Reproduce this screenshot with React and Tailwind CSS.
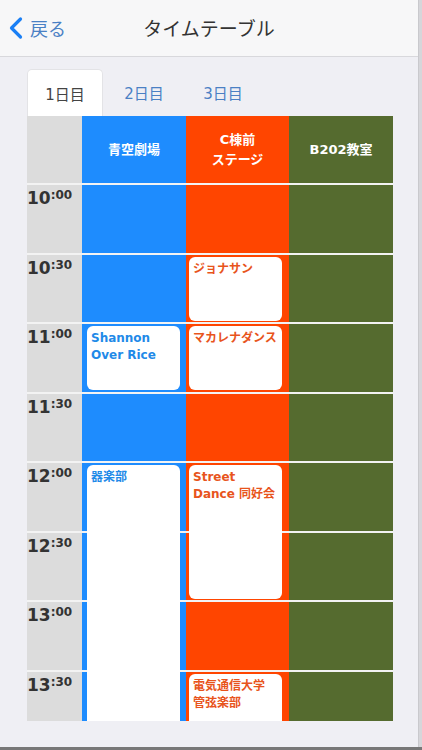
import React from 'react';

const font = { fontFamily: '"DejaVu Sans", "Noto Sans CJK JP", sans-serif' };

const times = [
  ['10', '00'], ['10', '30'], ['11', '00'], ['11', '30'],
  ['12', '00'], ['12', '30'], ['13', '00'], ['13', '30'],
];

const rowStart = ['row-start-2', 'row-start-3', 'row-start-4', 'row-start-5', 'row-start-6', 'row-start-7', 'row-start-8', 'row-start-9'];

const stages = [
  { col: 'col-start-2', bg: 'bg-[#1e8cfe]' },
  { col: 'col-start-3', bg: 'bg-[#ff4500]' },
  { col: 'col-start-4', bg: 'bg-[#556b2f]' },
];

const events = [
  { lines: ['ジョナサン'], cls: 'col-start-3 row-start-3 row-span-1', color: 'orange' },
  { lines: ['Shannon', 'Over Rice'], cls: 'col-start-2 row-start-4 row-span-1', color: 'blue', latin: true },
  { lines: ['マカレナダンス'], cls: 'col-start-3 row-start-4 row-span-1', color: 'orange' },
  { lines: ['器楽部'], cls: 'col-start-2 row-start-6 row-span-4', color: 'blue', open: true },
  { lines: ['Street', 'Dance 同好会'], cls: 'col-start-3 row-start-6 row-span-2', color: 'orange', latin: true },
  { lines: ['電気通信大学', '管弦楽部'], cls: 'col-start-3 row-start-9 row-span-1', color: 'orange', open: true },
];

function EventCard({ ev }) {
  const isBlue = ev.color === 'blue';
  const margin = isBlue ? 'ml-[5px] mr-[6px]' : 'ml-[3px] mr-[7px]';
  const text = isBlue ? 'text-[#1f8ae8]' : 'text-[#e8541c]';
  return (
    <div className={`${ev.cls} ${margin} mt-[2px] ${ev.open ? 'mb-0 rounded-t-[6px]' : 'mb-[1.5px] rounded-[6px]'} bg-white z-10`}>
      <div className={`px-[4px] pt-[4px] leading-[17px] whitespace-nowrap ${ev.latin ? 'font-bold' : 'font-semibold'} text-[12px] ${text}`}>
        {ev.lines.map((l, i) => (
          <div key={i}>{l}</div>
        ))}
      </div>
    </div>
  );
}

export default function App() {
  return (
    <div className="w-[422px] h-[750px] bg-[#d6d6da] flex flex-col overflow-hidden" style={font}>
      <div className="flex h-[747px]">
        <div className="w-[419px] h-full bg-[#efeff4] flex flex-col border-r border-[#c9c9cd]">
          {/* nav bar */}
          <div className="h-[57px] shrink-0 bg-[#f7f7f8] border-b border-[#d8d8dc] grid grid-cols-[1fr_auto_1fr] items-center">
            <div className="flex items-center pl-[8px] gap-[6px]">
              <svg width="16" height="24" viewBox="0 0 16 24" fill="none">
                <path d="M12.5 3 L3.5 12 L12.5 21" stroke="#1a7ff5" strokeWidth="3.2" strokeLinecap="round" strokeLinejoin="round" />
              </svg>
              <span className="text-[18px] text-[#4a80c4]" style={{ fontFamily: '"Noto Sans CJK JP", sans-serif' }}>戻る</span>
            </div>
            <div className="text-[19px] text-[#333]" style={{ fontFamily: '"Noto Sans CJK JP", sans-serif' }}>タイムテーブル</div>
            <div />
          </div>

          {/* tabs */}
          <div className="flex gap-[3px] pl-[27px] pt-[12px] h-[59px] shrink-0">
            <div className="w-[76px] h-[47px] bg-white rounded-t-[5px] border border-b-0 border-[#e3e3e6] flex items-center justify-center pt-[4px] text-[15px] text-[#444]">1日目</div>
            <div className="w-[76px] h-[47px] flex items-center justify-center pt-[4px] text-[15px] text-[#4a80c4]">2日目</div>
            <div className="w-[76px] h-[47px] flex items-center justify-center pt-[4px] text-[15px] text-[#4a80c4]">3日目</div>
          </div>

          {/* table */}
          <div className="ml-[27px] w-[366px] h-[605px] overflow-hidden bg-[#f3f3f3]">
            <div className="grid grid-cols-[55px_104px_103px_104px] grid-rows-[67px_repeat(8,67.5px)] gap-y-[2px]">
              <div className="col-start-1 row-start-1 bg-[#dcdcdc]" />
              <div className="col-start-2 row-start-1 bg-[#1e8cfe] flex items-center justify-center text-white text-[13px] font-bold">青空劇場</div>
              <div className="col-start-3 row-start-1 bg-[#ff4500] flex flex-col items-center justify-center text-white text-[13px] font-bold leading-[20px]">
                <span>C棟前</span>
                <span>ステージ</span>
              </div>
              <div className="col-start-4 row-start-1 bg-[#556b2f] flex items-center justify-center text-white text-[13px] font-bold">B202教室</div>

              {times.map((t, i) => (
                <React.Fragment key={i}>
                  <div className={`col-start-1 ${rowStart[i]} bg-[#dcdcdc] pt-[5px] text-[#333] font-bold flex items-start`}>
                    <span className="text-[17px] leading-none">{t[0]}</span>
                    <span className="text-[12px] leading-none -mt-[1px]">:{t[1]}</span>
                  </div>
                  {stages.map((s, j) => (
                    <div key={j} className={`${s.col} ${rowStart[i]} ${s.bg}`} />
                  ))}
                </React.Fragment>
              ))}

              {events.map((ev, i) => (
                <EventCard key={i} ev={ev} />
              ))}
            </div>
          </div>
        </div>
      </div>
      <div className="h-[3px] bg-[#777]" />
    </div>
  );
}
